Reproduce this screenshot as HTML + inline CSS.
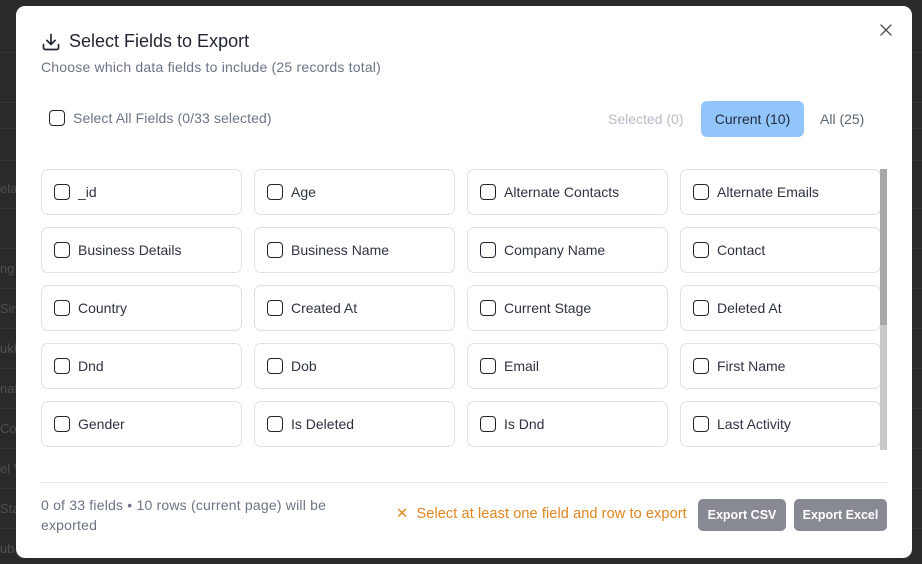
<!DOCTYPE html>
<html><head><style>
*{box-sizing:border-box;margin:0;padding:0}
body{width:922px;height:564px;background:#2a2a2b;font-family:"Liberation Sans",sans-serif;position:relative;overflow:hidden}
.bgl{position:absolute;left:0;right:0;height:1px;background:#353536}
.bgt{position:absolute;color:#505050;font-size:13px}
.modal{position:absolute;left:16px;top:6px;width:896px;height:552px;background:#fff;border-radius:9px}
.title{position:absolute;left:25px;top:25px;font-size:18px;color:#1f2430;display:flex;align-items:center;gap:8px}
.sub{position:absolute;left:25px;top:53px;font-size:14px;letter-spacing:0.2px;color:#6b7485}
.close{position:absolute;left:864px;top:17px}
.cb{width:16px;height:16px;border:1.5px solid #1f2430;border-radius:4px;display:inline-block;flex:none}
.selall{position:absolute;left:33px;top:104px;display:flex;align-items:center;gap:8px;color:#6b7485;font-size:14px;letter-spacing:0.1px}
.tab{position:absolute;top:95px;height:36px;line-height:36px;font-size:14px;padding:0 12px}
.grid{position:absolute;left:25px;top:163px}
.card{position:absolute;width:201px;height:46px;border:1px solid #dde2ea;border-radius:7px;display:flex;align-items:center;padding-left:12px;gap:8px;font-size:14px;color:#2d3340}
.sb{position:absolute;left:864px;top:163px;width:7px;height:281px;background:#c9c9c9}
.sbt{position:absolute;left:864px;top:163px;width:7px;height:156px;background:#a8a8a8}
.line{position:absolute;left:25px;top:476px;width:846px;height:1px;background:#e3e8ef}
.foot{position:absolute;left:25px;top:489px;font-size:14px;letter-spacing:0.2px;color:#6b7485;line-height:20px;width:330px}
.warn{position:absolute;left:380px;top:500px;font-size:14.5px;letter-spacing:0.1px;color:#e0841e}
.btn{position:absolute;top:493px;height:32px;line-height:32px;background:#878a93;color:#fff;font-size:12.5px;font-weight:bold;border-radius:5px;text-align:center}
</style></head><body>
<div class="bgl" style="top:52px"></div><div class="bgl" style="top:102px"></div><div class="bgl" style="top:128px"></div><div class="bgl" style="top:160px"></div><div class="bgl" style="top:208px"></div><div class="bgl" style="top:248px"></div><div class="bgl" style="top:288px"></div><div class="bgl" style="top:328px"></div><div class="bgl" style="top:368px"></div><div class="bgl" style="top:408px"></div><div class="bgl" style="top:448px"></div><div class="bgl" style="top:488px"></div><div class="bgl" style="top:528px"></div>
<div class="bgt" style="left:0;top:181px">ela</div><div class="bgt" style="left:0;top:261px">ng</div><div class="bgt" style="left:0;top:301px">Sir</div><div class="bgt" style="left:0;top:341px">ukh</div><div class="bgt" style="left:0;top:381px">nat</div><div class="bgt" style="left:0;top:421px">Cor</div><div class="bgt" style="left:0;top:461px">el V</div><div class="bgt" style="left:0;top:501px">Stap</div><div class="bgt" style="left:0;top:541px">ub</div>
<div class="modal">
<div class="title"><svg width="20" height="20" viewBox="0 0 24 24" fill="none" stroke="#1f2430" stroke-width="2" stroke-linecap="round" stroke-linejoin="round"><path d="M12 3v12M7 10l5 5 5-5M3 15v4a2 2 0 0 0 2 2h14a2 2 0 0 0 2-2v-4"/></svg>Select Fields to Export</div>
<div class="sub">Choose which data fields to include (25 records total)</div>
<div class="close"><svg width="12" height="12" viewBox="0 0 12 12" stroke="#555" stroke-width="1.4" stroke-linecap="round"><path d="M1 1l10 10M11 1L1 11"/></svg></div>
<div class="selall"><span class="cb"></span>Select All Fields (0/33 selected)</div>
<div class="tab" style="left:580px;color:#b5bcc6">Selected (0)</div>
<div class="tab" style="left:685px;width:103px;background:#93c5fd;border-radius:6px;color:#1f2a3a;text-align:center;padding:0">Current (10)</div>
<div class="tab" style="left:792px;color:#5d6676">All (25)</div>
<div class="grid">
<div class="card" style="left:0;top:0"><span class="cb"></span>_id</div>
<div class="card" style="left:213px;top:0"><span class="cb"></span>Age</div>
<div class="card" style="left:426px;top:0"><span class="cb"></span>Alternate Contacts</div>
<div class="card" style="left:639px;top:0"><span class="cb"></span>Alternate Emails</div>
<div class="card" style="left:0;top:58px"><span class="cb"></span>Business Details</div>
<div class="card" style="left:213px;top:58px"><span class="cb"></span>Business Name</div>
<div class="card" style="left:426px;top:58px"><span class="cb"></span>Company Name</div>
<div class="card" style="left:639px;top:58px"><span class="cb"></span>Contact</div>
<div class="card" style="left:0;top:116px"><span class="cb"></span>Country</div>
<div class="card" style="left:213px;top:116px"><span class="cb"></span>Created At</div>
<div class="card" style="left:426px;top:116px"><span class="cb"></span>Current Stage</div>
<div class="card" style="left:639px;top:116px"><span class="cb"></span>Deleted At</div>
<div class="card" style="left:0;top:174px"><span class="cb"></span>Dnd</div>
<div class="card" style="left:213px;top:174px"><span class="cb"></span>Dob</div>
<div class="card" style="left:426px;top:174px"><span class="cb"></span>Email</div>
<div class="card" style="left:639px;top:174px"><span class="cb"></span>First Name</div>
<div class="card" style="left:0;top:232px"><span class="cb"></span>Gender</div>
<div class="card" style="left:213px;top:232px"><span class="cb"></span>Is Deleted</div>
<div class="card" style="left:426px;top:232px"><span class="cb"></span>Is Dnd</div>
<div class="card" style="left:639px;top:232px"><span class="cb"></span>Last Activity</div>
</div>
<div class="sb"></div><div class="sbt"></div>
<div class="line"></div>
<div class="foot">0 of 33 fields • 10 rows (current page) will be<br>exported</div>
<div class="warn">✕&nbsp; Select at least one field and row to export</div>
<div class="btn" style="left:682px;width:88px">Export CSV</div>
<div class="btn" style="left:778px;width:93px">Export Excel</div>
</div>
</body></html>
